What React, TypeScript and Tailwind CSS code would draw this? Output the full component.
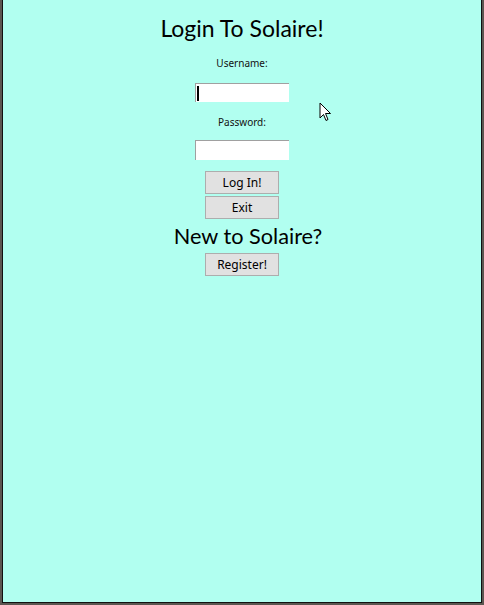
export default function App() {
  return (
    <div className="w-[484px] h-[605px] bg-[#5b5650] pl-[2px] pr-[2px] pb-[2px] overflow-hidden">
      <div className="relative h-full bg-[#b1fff0] border-l border-r border-b border-[#111]">
        <div className="flex flex-col items-center">
          <h1 className="mt-[14px] text-[23px] leading-[28px] text-black" style={{ fontFamily: "Lato, sans-serif" }}>
            Login To Solaire!
          </h1>
          <label className="mt-[14px] text-[10px] leading-[14px] text-[#111]" style={{ fontFamily: "'Noto Sans', sans-serif" }}>
            Username:
          </label>
          <div className="mt-[13px] relative w-[94px] h-[19px] bg-white border-t border-l border-[#a0a0a0]">
            <span className="absolute left-[1px] top-[2px] w-[2px] h-[15px] bg-black" />
          </div>
          <label className="mt-[13px] text-[10px] leading-[14px] text-[#111]" style={{ fontFamily: "'Noto Sans', sans-serif" }}>
            Password:
          </label>
          <div className="mt-[11px] w-[94px] h-[20px] bg-white border-t border-l border-[#a0a0a0]" />
          <div className="mt-[11px] flex flex-col gap-[2px]" style={{ fontFamily: "'Noto Sans', sans-serif" }}>
            <button className="w-[74px] h-[23px] bg-[#e1e1e1] border border-[#adadad] text-[12px] leading-none text-black">
              Log In!
            </button>
            <button className="w-[74px] h-[23px] bg-[#e1e1e1] border border-[#adadad] text-[12px] leading-none text-black">
              Exit
            </button>
          </div>
          <h2 className="mt-[3px] ml-[12px] text-[21.7px] leading-[28px] text-black" style={{ fontFamily: "Lato, sans-serif" }}>
            New to Solaire?
          </h2>
          <button
            className="mt-[3px] w-[74px] h-[23px] bg-[#e1e1e1] border border-[#adadad] text-[12px] leading-none text-black"
            style={{ fontFamily: "'Noto Sans', sans-serif" }}
          >
            Register!
          </button>
        </div>
        <svg className="absolute left-[316px] top-[102px]" width="14" height="21" viewBox="0 0 14 21">
          <path d="M1 1 L1 16 L4.5 12.5 L7 18.5 L9 17.5 L6.5 11.5 L11.5 11.5 Z" fill="white" stroke="black" strokeWidth="1" strokeLinejoin="miter" />
        </svg>
      </div>
    </div>
  );
}
